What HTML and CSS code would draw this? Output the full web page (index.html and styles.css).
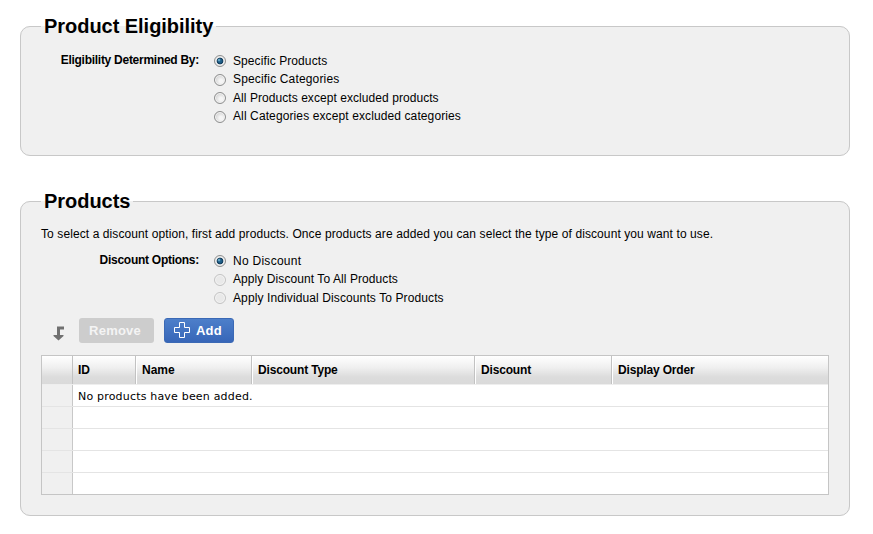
FILE: index.html
```html
<!DOCTYPE html>
<html lang="en">
<head>
<meta charset="utf-8">
<title>Product Eligibility</title>
<link rel="stylesheet" href="styles.css">
</head>
<body>
<form>
<fieldset class="panel eligibility">
  <legend>Product Eligibility</legend>
  <div class="field">
    <div class="label">Eligibility Determined By:</div>
    <div class="options">
      <label><i class="radio on"></i><span class="o1">Specific Products</span></label>
      <label><i class="radio low"></i><span class="o2">Specific Categories</span></label>
      <label><i class="radio"></i><span class="o3">All Products except excluded products</span></label>
      <label><i class="radio low"></i><span class="o4">All Categories except excluded categories</span></label>
    </div>
  </div>
</fieldset>
<fieldset class="panel products">
  <legend>Products</legend>
  <p class="hint">To select a discount option, first add products. Once products are added you can select the type of discount you want to use.</p>
  <div class="field discount">
    <div class="label">Discount Options:</div>
    <div class="options">
      <label><i class="radio on"></i><span class="o5">No Discount</span></label>
      <label><i class="radio off low"></i><span class="o6">Apply Discount To All Products</span></label>
      <label><i class="radio off"></i><span class="o7">Apply Individual Discounts To Products</span></label>
    </div>
  </div>
  <div class="toolbar">
    <svg class="arrow" width="12" height="15" viewBox="0 0 12 15"><path d="M4 .5H11V3.500H7V9H10.500V10L5.500 14.500L.5 10V9H4Z" fill="#707070"/></svg>
    <button type="button" class="btn remove" disabled>Remove</button>
    <button type="button" class="btn add"><svg width="17" height="17" viewBox="0 0 17 17"><path d="M5.500 .5H10.500V5.500H15.500V10.500H10.500V15.500H5.500V10.500H.5V5.500H5.500Z" fill="none" stroke="#fff"/></svg><span>Add</span></button>
  </div>
  <div class="grid">
    <div class="row head"><b></b><b class="id">ID</b><b class="name">Name</b><b>Discount Type</b><b>Discount</b><b>Display Order</b></div>
    <div class="row"><i></i><span>No products have been added.</span></div>
    <div class="row"><i></i><span></span></div>
    <div class="row"><i></i><span></span></div>
    <div class="row"><i></i><span></span></div>
    <div class="row"><i></i><span></span></div>
  </div>
</fieldset>
</form>
</body>
</html>
```
FILE: styles.css
```css
* { box-sizing: border-box; }
body { margin: 0; background: #fff; color: #000; font: 12px/18px "Liberation Sans", Arial, sans-serif; }
form { padding: 14px 23px 0 20px; }
.panel { margin: 0; padding: 0 20px; border: 1px solid #c8c8c8; border-radius: 10px; background: #f0f0f0; min-width: 0; }
.eligibility { height: 142px; }
.products { height: 327px; margin-top: 33px; }
legend { padding: 0 3px; font-size: 20px; font-weight: bold; line-height: 24px; letter-spacing: -.04px; white-space: nowrap; }
.field { display: flex; }
.eligibility .field { padding-top: 13px; }
.discount { height: 56px; }
.label { width: 158px; text-align: right; font-weight: bold; letter-spacing: -.27px; white-space: nowrap; }
.options { margin-left: 15px; padding-top: 1px; }
.options label { display: flex; height: 18.4px; white-space: nowrap; }
.radio { width: 12px; height: 12px; margin: 3px 7px 0 0; border: 1px solid #8e8f8f; border-radius: 50%; background: radial-gradient(circle at 60% 60%, #f5f5f5 0 20%, #cfcfcf 75%); box-shadow: inset 0 0 0 1px #f4f4f4; }
.radio.low { margin-top: 4px; }
.radio.on { background: radial-gradient(circle at 4px 4px, #8fd0ea, transparent 1.8px), radial-gradient(circle at 5px 5px, #1f608a 1.5px, #123b5a 3px, transparent 3.7px), #ececec; box-shadow: none; }
.radio.off { border-color: #c4c4c4; background: #e9e9e9; }
.o1 { letter-spacing: .09px; }
.o2 { letter-spacing: .16px; }
.o3 { letter-spacing: .06px; }
.o4 { letter-spacing: .11px; }
.o5 { letter-spacing: .27px; }
.o6 { letter-spacing: .08px; }
.o7 { letter-spacing: .11px; }
.hint { margin: 12px 0 9px; height: 17px; letter-spacing: .094px; white-space: nowrap; }
.toolbar { display: flex; height: 25px; margin-top: 11px; padding-left: 12px; }
.arrow { margin: 8px 14px 0 0; }
.btn { height: 25px; border: 0; border-radius: 3px; padding: 0; color: #fff; font: bold 13px/24px "Liberation Sans", Arial, sans-serif; letter-spacing: .2px; }
.remove { width: 75px; margin-right: 10px; padding-right: 3px; padding-top: 1px; background: #cdcdcd; color: #f4f4f4; }
.add { width: 70px; display: flex; align-items: center; background: linear-gradient(#4d7fca, #3766b8); border: 1px solid #3b69b5; padding-left: 9px; }
.add span { margin-left: 5px; }
.grid { width: 788px; height: 140px; margin-top: 12px; border: 1px solid #c5c5c5; background: #fff; }
.row { display: grid; grid-template-columns: 31px 1fr; height: 22px; border-bottom: 1px solid #e4e4e4; }
.row:not(.head) { grid-template-rows: 21px; }
.row:last-child { height: 21px; border-bottom: 0; }
.row i { background: #f0f0f0; border-right: 1px solid #c8c8c8; }
.row span { height: 21px; padding-left: 5px; font: 11px/24px "DejaVu Sans", sans-serif; letter-spacing: .19px; white-space: nowrap; }
.head { grid-template-columns: 31px 63px 116px 223px 137px 1fr; height: 29px; background: linear-gradient(#fff, #f0f0f0 40%, #dcdcdc 75%, #dadada); border-bottom: 1px solid #eee; }
.head b { padding-left: 6px; line-height: 28px; letter-spacing: -.17px; border-right: 1px solid #c2c2c2; box-shadow: 1px 0 #fff; }
.head .id { padding-left: 5px; }
.head .name { letter-spacing: 0; }
.head b:first-child { box-shadow: none; }
.head b:last-child { border-right: 0; box-shadow: none; }
```
